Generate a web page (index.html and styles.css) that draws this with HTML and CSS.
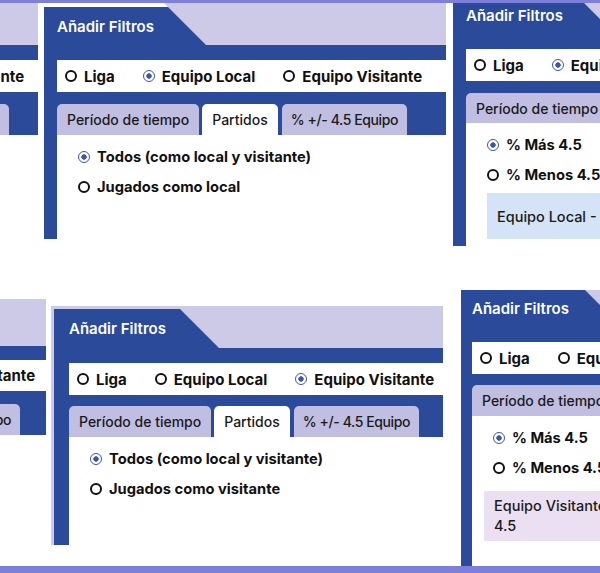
FILE: index.html
```html
<!DOCTYPE html>
<html lang="es">
<head>
<meta charset="utf-8">
<title>Añadir Filtros</title>
<link rel="stylesheet" href="styles.css">
</head>
<body>
<div class="stage">
  <div class="strip strip--top"></div>

  <div class="row row--top">
    <section class="panel panel--a">
      <div class="card">
        <div class="head"><div class="tab">Añadir Filtros</div></div>
        <div class="body">
          <div class="opts">
            <span class="opt"><span class="radio"></span>Liga</span>
            <span class="opt"><span class="radio"></span>Equipo Local</span>
            <span class="opt"><span class="radio radio--on"></span>Equipo Visitante</span>
          </div>
          <div class="tabs">
            <span class="ttab ttab--active">Período de tiempo</span>
            <span class="ttab">Partidos</span>
            <span class="ttab ttab--pct">% +/- 4.5 Equipo</span>
          </div>
          <div class="content"></div>
        </div>
      </div>
    </section>

    <section class="panel panel--b">
      <div class="card">
        <div class="head"><div class="tab">Añadir Filtros</div></div>
        <div class="body">
          <div class="opts">
            <span class="opt"><span class="radio"></span>Liga</span>
            <span class="opt"><span class="radio radio--on"></span>Equipo Local</span>
            <span class="opt"><span class="radio"></span>Equipo Visitante</span>
          </div>
          <div class="tabs">
            <span class="ttab">Período de tiempo</span>
            <span class="ttab ttab--active">Partidos</span>
            <span class="ttab ttab--pct">% +/- 4.5 Equipo</span>
          </div>
          <div class="content">
            <div class="choices">
              <span class="choice"><span class="radio radio--on"></span>Todos (como local y visitante)</span>
              <span class="choice"><span class="radio"></span>Jugados como local</span>
            </div>
          </div>
        </div>
      </div>
    </section>

    <section class="panel panel--c">
      <div class="card">
        <div class="head"><div class="tab">Añadir Filtros</div></div>
        <div class="body">
          <div class="opts">
            <span class="opt"><span class="radio"></span>Liga</span>
            <span class="opt"><span class="radio radio--on"></span>Equipo Local</span>
            <span class="opt"><span class="radio"></span>Equipo Visitante</span>
          </div>
          <div class="tabs">
            <span class="ttab">Período de tiempo</span>
            <span class="ttab">Partidos</span>
            <span class="ttab ttab--pct ttab--active">% +/- 4.5 Equipo</span>
          </div>
          <div class="content">
            <div class="choices">
              <span class="choice"><span class="radio radio--on"></span>% Más 4.5</span>
              <span class="choice"><span class="radio"></span>% Menos 4.5</span>
            </div>
            <div class="note note--local">Equipo Local - % Más 4.5</div>
          </div>
        </div>
      </div>
    </section>
  </div>

  <div class="row row--bottom">
    <section class="panel panel--d panel--framed">
      <div class="card">
        <div class="head"><div class="tab">Añadir Filtros</div></div>
        <div class="body">
          <div class="opts">
            <span class="opt"><span class="radio"></span>Liga</span>
            <span class="opt"><span class="radio"></span>Equipo Local</span>
            <span class="opt"><span class="radio radio--on"></span>Equipo Visitante</span>
          </div>
          <div class="tabs">
            <span class="ttab ttab--active">Período de tiempo</span>
            <span class="ttab">Partidos</span>
            <span class="ttab ttab--pct">% +/- 4.5 Equipo</span>
          </div>
          <div class="content"></div>
        </div>
      </div>
    </section>

    <section class="panel panel--e panel--framed">
      <div class="card">
        <div class="head"><div class="tab">Añadir Filtros</div></div>
        <div class="body">
          <div class="opts">
            <span class="opt"><span class="radio"></span>Liga</span>
            <span class="opt"><span class="radio"></span>Equipo Local</span>
            <span class="opt"><span class="radio radio--on"></span>Equipo Visitante</span>
          </div>
          <div class="tabs">
            <span class="ttab">Período de tiempo</span>
            <span class="ttab ttab--active">Partidos</span>
            <span class="ttab ttab--pct">% +/- 4.5 Equipo</span>
          </div>
          <div class="content">
            <div class="choices">
              <span class="choice"><span class="radio radio--on"></span>Todos (como local y visitante)</span>
              <span class="choice"><span class="radio"></span>Jugados como visitante</span>
            </div>
          </div>
        </div>
      </div>
    </section>

    <section class="panel panel--f">
      <div class="card">
        <div class="head"><div class="tab">Añadir Filtros</div></div>
        <div class="body">
          <div class="opts">
            <span class="opt"><span class="radio"></span>Liga</span>
            <span class="opt"><span class="radio"></span>Equipo Local</span>
            <span class="opt"><span class="radio radio--on"></span>Equipo Visitante</span>
          </div>
          <div class="tabs">
            <span class="ttab">Período de tiempo</span>
            <span class="ttab">Partidos</span>
            <span class="ttab ttab--pct ttab--active">% +/- 4.5 Equipo</span>
          </div>
          <div class="content">
            <div class="choices">
              <span class="choice"><span class="radio radio--on"></span>% Más 4.5</span>
              <span class="choice"><span class="radio"></span>% Menos 4.5</span>
            </div>
            <div class="note note--visit">Equipo Visitante - % Más<br>4.5</div>
          </div>
        </div>
      </div>
    </section>
  </div>

  <div class="strip strip--bottom"></div>
</div>
</body>
</html>
```

FILE: styles.css
```css
* { box-sizing: border-box; }

html, body { margin: 0; padding: 0; }

body {
  width: 600px;
  height: 573px;
  overflow: hidden;
  background: #fff;
  font-family: Inter, "Open Sans", "DejaVu Sans", sans-serif;
  color: #111;
  --blue: #2b4a9a;
  --lav: #cdcae7;
  --tablav: #c0bee1;
}

.stage {
  display: flex;
  flex-direction: column;
  height: 573px;
}

.strip {
  flex: none;
  background: #7c80db;
  position: relative;
  z-index: 2;
}
.strip--top { height: 3px; }
.strip--bottom { height: 7px; }

.row {
  flex: none;
  display: flex;
  align-items: flex-start;
}
.row--top { height: 277px; }
.row--bottom { height: 286px; }

/* panel */
.panel {
  flex: none;
  width: var(--w);
  --cap: 0px;
  --cap-color: #fff;
}
.panel--framed {
  background: var(--lav);
  padding: 3px 0 0 3px;
}
.card {
  background: var(--blue);
}

.head {
  height: var(--head-h);
  background: var(--lav);
}
.tab {
  height: 100%;
  width: calc(var(--tw) + var(--head-h));
  clip-path: polygon(0 0, var(--tw) 0, 100% 100%, 0 100%);
  background: linear-gradient(var(--cap-color) 0 var(--cap), var(--blue) var(--cap));
  padding-left: var(--bw);
  padding-top: var(--cap);
  display: flex;
  align-items: center;
  color: #fff;
  font-weight: 600;
  font-size: 15px;
  white-space: nowrap;
}

.body {
  padding-left: var(--bw);
  padding-top: var(--band);
}

.opts {
  height: var(--row-h);
  background: #fff;
  display: flex;
  align-items: center;
  gap: 28px;
  padding-left: 8px;
  font-weight: 700;
  font-size: 15px;
  white-space: nowrap;
}
.opt {
  display: flex;
  align-items: center;
  gap: 7px;
}

.radio {
  flex: none;
  width: 12px;
  height: 12px;
  border-radius: 50%;
  border: 2px solid #111;
  background: #fff;
}
.radio--on {
  border: 1.6px solid #3d56a6;
  background: radial-gradient(circle, #3d56a6 0 2.4px, #fff 3px);
}

.tabs {
  display: flex;
  gap: 3px;
  margin-top: var(--gap);
  height: var(--tab-h);
  white-space: nowrap;
}
.ttab {
  flex: none;
  display: flex;
  align-items: center;
  padding: 0 10px;
  border-radius: 5px 5px 0 0;
  background: var(--tablav);
  font-size: 14px;
  font-weight: 500;
  color: #1a1a1a;
}
.ttab--pct {
  margin-left: 1px;
  padding: 0 9px;
  letter-spacing: -0.4px;
}
.ttab--active { background: #fff; }

.content {
  height: var(--content-h);
  background: #fff;
  padding: 13px 0 0 21px;
}
.choices {
  display: flex;
  flex-direction: column;
  gap: 12px;
  font-weight: 700;
  font-size: 14.7px;
}
.choice {
  height: 18px;
  display: flex;
  align-items: center;
  gap: 7px;
  white-space: nowrap;
}

.note {
  font-size: 14.5px;
  font-weight: 500;
  color: #1a1a1a;
  padding: 0 10px;
  white-space: nowrap;
}
.note--local {
  margin-top: 9px;
  height: 46px;
  display: flex;
  align-items: center;
  background: #d4e3f5;
}
.note--visit {
  margin-top: 14px;
  margin-left: -9px;
  padding: 5px 10px;
  line-height: 20px;
  background: #ebe0f1;
}

/* per-panel geometry */
.panel--a, .panel--b {
  --head-h: 42px;
  --cap: 4px;
  --cap-color: #fff;
  --tw: 120px;
  --bw: 13px;
  --band: 15px;
  --row-h: 32px;
  --gap: 12px;
  --tab-h: 31px;
  --content-h: 104px;
}
.panel--a { --w: 392px; margin-left: -354px; }
.panel--b { --w: 402px; margin-left: 6px; }

.panel--c {
  --w: 400px;
  margin-left: 7px;
  margin-top: -7px;
  --head-h: 38px;
  --tw: 124px;
  --bw: 13px;
  --band: 15px;
  --row-h: 32px;
  --gap: 12px;
  --tab-h: 30px;
  --content-h: 123px;
}

.panel--d {
  --w: 394px;
  margin-left: -348px;
  margin-top: 19px;
  --head-h: 44px;
  --tw: 124px;
  --bw: 15px;
  --band: 14px;
  --row-h: 31px;
  --gap: 13px;
  --tab-h: 31px;
  --content-h: 110px;
}

.panel--e {
  --w: 392px;
  margin-left: 5px;
  margin-top: 26px;
  --head-h: 39px;
  --tw: 126px;
  --bw: 15px;
  --band: 15px;
  --row-h: 32px;
  --gap: 11px;
  --tab-h: 31px;
  --content-h: 108px;
}

.panel--f {
  --w: 400px;
  margin-left: 18px;
  margin-top: 10px;
  --head-h: 37px;
  --tw: 124px;
  --bw: 11px;
  --band: 15px;
  --row-h: 32px;
  --gap: 11px;
  --tab-h: 31px;
  --content-h: 150px;
}
```
